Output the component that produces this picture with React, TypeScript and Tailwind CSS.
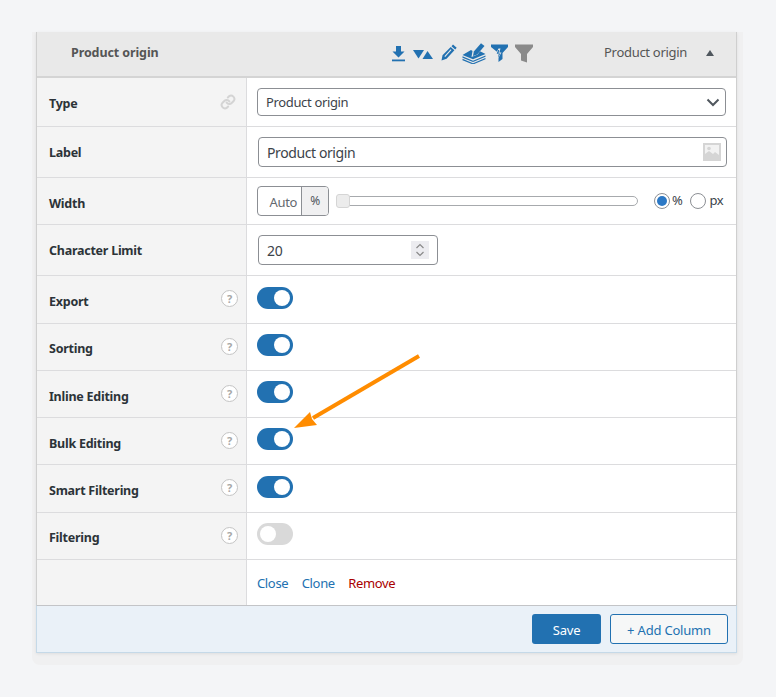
const font = { fontFamily: '"Noto Sans", sans-serif' };

function Help() {
  return (
    <span className="ml-auto mr-[1px] flex h-[17px] w-[17px] -translate-y-[1px] items-center justify-center rounded-full border border-[#c4c4c4] bg-white text-[11px] leading-none font-bold text-[#a8a8a8]">
      ?
    </span>
  );
}

function Toggle({ on = true }: { on?: boolean }) {
  return (
    <span className={`flex h-[22px] w-[36px] items-center rounded-full px-[3px] ${on ? "justify-end bg-[#2271b1]" : "justify-start bg-[#d9d9d9]"}`}>
      <span className="h-[16px] w-[16px] rounded-full bg-white" />
    </span>
  );
}

function Row({ label, h, help, icon, children, last, labelClass = "pt-[4px]" }: { label?: string; h: string; help?: boolean; icon?: React.ReactNode; children: React.ReactNode; last?: boolean; labelClass?: string }) {
  return (
    <div className={`flex shrink-0 ${h} ${last ? "" : "border-b border-[#dcdcde]"}`}>
      <div className="flex w-[210px] shrink-0 items-center border-r border-[#dcdcde] bg-[#f4f4f4] pl-[12px] pr-[7px] text-[12.5px] font-bold tracking-[-0.25px] text-[#2c3338]">
        <span className={labelClass}>{label}</span>
        {help && <Help />}
        {icon}
      </div>
      <div className="flex min-w-0 flex-1 items-center pl-[10px] pr-[10px] tracking-[-0.35px]">{children}</div>
    </div>
  );
}

function HeaderIcons() {
  return (
    <div className="flex items-center text-[#2271b1]">
      <svg width="13" height="16" viewBox="0 0 13 16" fill="currentColor" className="mt-[1px]">
        <path d="M4 0h5v5.500h3.500L6.500 11.500 .5 5.500H4z" />
        <rect x="0" y="13.500" width="13" height="1.800" />
      </svg>
      <svg width="20" height="9" viewBox="0 0 20 9" fill="currentColor" className="ml-[8px] mt-[3px]">
        <path d="M0 0h11L5.500 8.500z" />
        <path d="M14.500 1L20 9H9.500z" />
      </svg>
      <svg width="16" height="17" viewBox="0 0 16 17" fill="currentColor" className="ml-[8px] -mt-[1px]">
        <path d="M12 0.500l3.700 3.200-1.500 1.800-3.700-3.300zM9.700 3l3.700 3.200-7.800 8.500-5.100 1.800 1-5.200zM9.700 5.300L3.400 12.200l.8.700 6.300-6.900z" fillRule="evenodd" />
      </svg>
      <svg width="24" height="21" viewBox="0 0 24 21" fill="currentColor" className="ml-[5px]">
        <path d="M19 0.300l3.500 2.700-7.300 8.400-4.200 1.500.8-4.300z" />
        <path d="M9 7L.5 12l10.500 4.300L23.500 11 18 8.300l-2.300 3.300-6.200 2.400 1-6z" />
        <path d="M.5 13.300L11 17.700l12.500-5.300v1.300L11 19 .5 14.700z" />
        <path d="M.5 15.800L11 20.200l12.500-5.300v1.300L11 21.500 .5 17.200z" />
      </svg>
      <svg width="17" height="18" viewBox="0 0 17 18" className="ml-[5px]">
        <path d="M0 .500h17v2.500l-5.500 6v6l-4 3V9L0 3z" fill="currentColor" />
        <path d="M7.500 4.500L4.500 10.500h2.200L5.500 17l5-8.500H8.300l1.200-4z" fill="#e9e9e9" />
        <path d="M7.200 6L5.700 9.700h2L7 14l2.300-4.500H7.500l.7-3.500z" fill="currentColor" />
      </svg>
      <svg width="18" height="19" viewBox="0 0 18 19" fill="#8a8a8a" className="ml-[7px] mt-[1px]">
        <path d="M0 .500h18v2.500l-6 7v8.500l-6-2V10L0 3z" />
      </svg>
    </div>
  );
}

export default function App() {
  return (
    <div className="h-[697px] w-[776px] overflow-hidden bg-[#f4f5f7] pl-[32px] pr-[33px] pt-[32px] text-[13px] text-[#3c434a]" style={font}>
      <div className="relative h-[633px] rounded-b-[8px] bg-[#f0f0f1] pl-[4px] pr-[6px]">
        <div className="flex h-[621px] flex-col border-x border-[#cfcfcf] bg-white shadow-[0_1px_3px_rgba(0,0,0,0.08)]">
          {/* header */}
          <div className="flex h-[46px] shrink-0 items-center border-b-2 border-[#d4d4d4] bg-[#e9e9e9] pb-[2px] pl-[34px] pr-[22px]">
            <span className="w-[321px] text-[12.5px] font-bold tracking-[-0.1px] text-[#555]">Product origin</span>
            <HeaderIcons />
            <span className="ml-auto mr-[19px] tracking-[-0.3px] text-[#555]">Product origin</span>
            <span className="h-0 w-0 border-x-[4.5px] border-b-[6px] border-x-transparent border-b-[#50575e]" />
          </div>

          <Row label="Type" h="h-[49px]" labelClass="pt-[4px]" icon={
            <svg className="ml-auto mr-[3px]" width="16" height="16" viewBox="0 0 24 24" fill="none" stroke="#d4d4d4" strokeWidth="3" strokeLinecap="round">
              <path d="M10 13a5 5 0 0 0 7.500.5l3-3a5 5 0 0 0-7-7l-1.700 1.700" />
              <path d="M14 11a5 5 0 0 0-7.500-.5l-3 3a5 5 0 0 0 7 7l1.700-1.700" />
            </svg>
          }>
            <div className="flex h-[28px] w-full items-center justify-between rounded-[4px] border border-[#8c8f94] bg-white pl-[8px] pr-[5px]">
              <span className="pt-[2px]">Product origin</span>
              <svg width="14" height="14" viewBox="0 0 14 14" fill="none" stroke="#50575e" strokeWidth="2"><path d="M1.500 4.500L7 10l5.500-5.500" /></svg>
            </div>
          </Row>

          <Row label="Label" h="h-[51px]" labelClass="pt-[2px]">
            <div className="ml-[1px] -mr-[1px] flex h-[30px] w-full items-center justify-between rounded-[4px] border border-[#8c8f94] bg-white pl-[8px] pr-[5px] text-[14px] tracking-[-0.4px]">
              <span>Product origin</span>
              <svg width="18" height="18" viewBox="0 0 18 18">
                <rect width="18" height="18" fill="#d5d5d5" />
                <rect x="2" y="2" width="14" height="14" fill="#f2f2f2" />
                <path d="M2 16v-5l4-3 4 3 2-2 4 3v4z" fill="#d5d5d5" />
                <circle cx="6" cy="5.500" r="1.800" fill="#d5d5d5" />
              </svg>
            </div>
          </Row>

          <Row label="Width" h="h-[47px]" labelClass="pt-[6px]">
            <div className="flex h-[30px] w-[72px] shrink-0 overflow-hidden rounded-[4px] border border-[#8c8f94]">
              <span className="flex w-[44px] items-center justify-end border-r border-[#8c8f94] pr-[4px] pt-[4px] text-[#646970]">Auto</span>
              <span className="flex flex-1 items-center justify-center bg-[#f0f0f1] text-[12px] text-[#50575e]">%</span>
            </div>
            <div className="relative ml-[7px] h-[10px] w-[302px] shrink-0 rounded-full border border-[#a7aaad] bg-white">
              <span className="absolute left-[-1px] top-[-3px] h-[14px] w-[14px] rounded-[3px] border border-[#d5d5d5] bg-[#ececec]" />
            </div>
            <span className="ml-[16px] flex h-[16px] w-[16px] items-center justify-center rounded-full border border-[#8c8f94] bg-white">
              <span className="h-[10px] w-[10px] rounded-full bg-[#2b78c5]" />
            </span>
            <span className="ml-[2px]">%</span>
            <span className="ml-[8px] h-[16px] w-[16px] rounded-full border border-[#8c8f94] bg-white" />
            <span className="ml-[3px]">px</span>
          </Row>

          <Row label="Character Limit" h="h-[51px]" labelClass="pt-[2px]">
            <div className="ml-[1px] flex h-[30px] w-[180px] items-center justify-between rounded-[4px] border border-[#8c8f94] bg-white pl-[8px] pr-[8px] text-[14px]">
              <span>20</span>
              <svg width="18" height="18" viewBox="0 0 18 18" fill="none" stroke="#8a8a8a" strokeWidth="1.200">
                <rect width="18" height="18" fill="#ececf0" stroke="none" />
                <path d="M5.500 7L9 3.500 12.500 7M5.500 11L9 14.500 12.500 11" />
              </svg>
            </div>
          </Row>

          <Row label="Export" h="h-[48px]" help labelClass="pt-[6px]"><div className="-mt-[4px]"><Toggle /></div></Row>
          <Row label="Sorting" h="h-[47px]" help labelClass="pt-[4px]"><div className="-mt-[4px]"><Toggle /></div></Row>
          <Row label="Inline Editing" h="h-[47px]" help labelClass="pt-[6px]"><div className="-mt-[4px]"><Toggle /></div></Row>
          <Row label="Bulk Editing" h="h-[47px]" help labelClass="pt-[6px]"><div className="-mt-[4px]"><Toggle /></div></Row>
          <Row label="Smart Filtering" h="h-[48px]" help labelClass="pt-[6px]"><div className="-mt-[4px]"><Toggle /></div></Row>
          <Row label="Filtering" h="h-[47px]" help labelClass="pt-[4px]"><div className="-mt-[4px]"><Toggle on={false} /></div></Row>

          <Row h="h-[45px]" last>
            <div className="flex gap-[13.5px] pt-[3px]">
              <span className="text-[#2271b1]">Close</span>
              <span className="text-[#2271b1]">Clone</span>
              <span className="text-[#a00]">Remove</span>
            </div>
          </Row>

          <div className="-mx-[1px] flex h-[48px] shrink-0 items-center justify-end gap-[9px] border border-t-[#c3c4c7] border-x-[#c5d9e8] border-b-[#c5d9e8] bg-[#eaf1f8] pr-[8px] tracking-[-0.2px]">
            <span className="flex h-[30px] w-[69px] items-center justify-center rounded-[3px] bg-[#2271b1] pt-[3px] text-white">Save</span>
            <span className="flex h-[30px] w-[118px] items-center justify-center rounded-[3px] border border-[#2271b1] bg-[#f6f7f7] pt-[3px] text-[#2271b1]">+ Add Column</span>
          </div>
        </div>

        <svg className="absolute left-[255px] top-[318px]" width="140" height="85" viewBox="0 0 140 85" fill="none">
          <path d="M132 6L26 68" stroke="#ff8c00" strokeWidth="4" />
          <path d="M7 78L23 62 25 69 30 75z" fill="#ff8c00" />
        </svg>
      </div>
    </div>
  );
}
